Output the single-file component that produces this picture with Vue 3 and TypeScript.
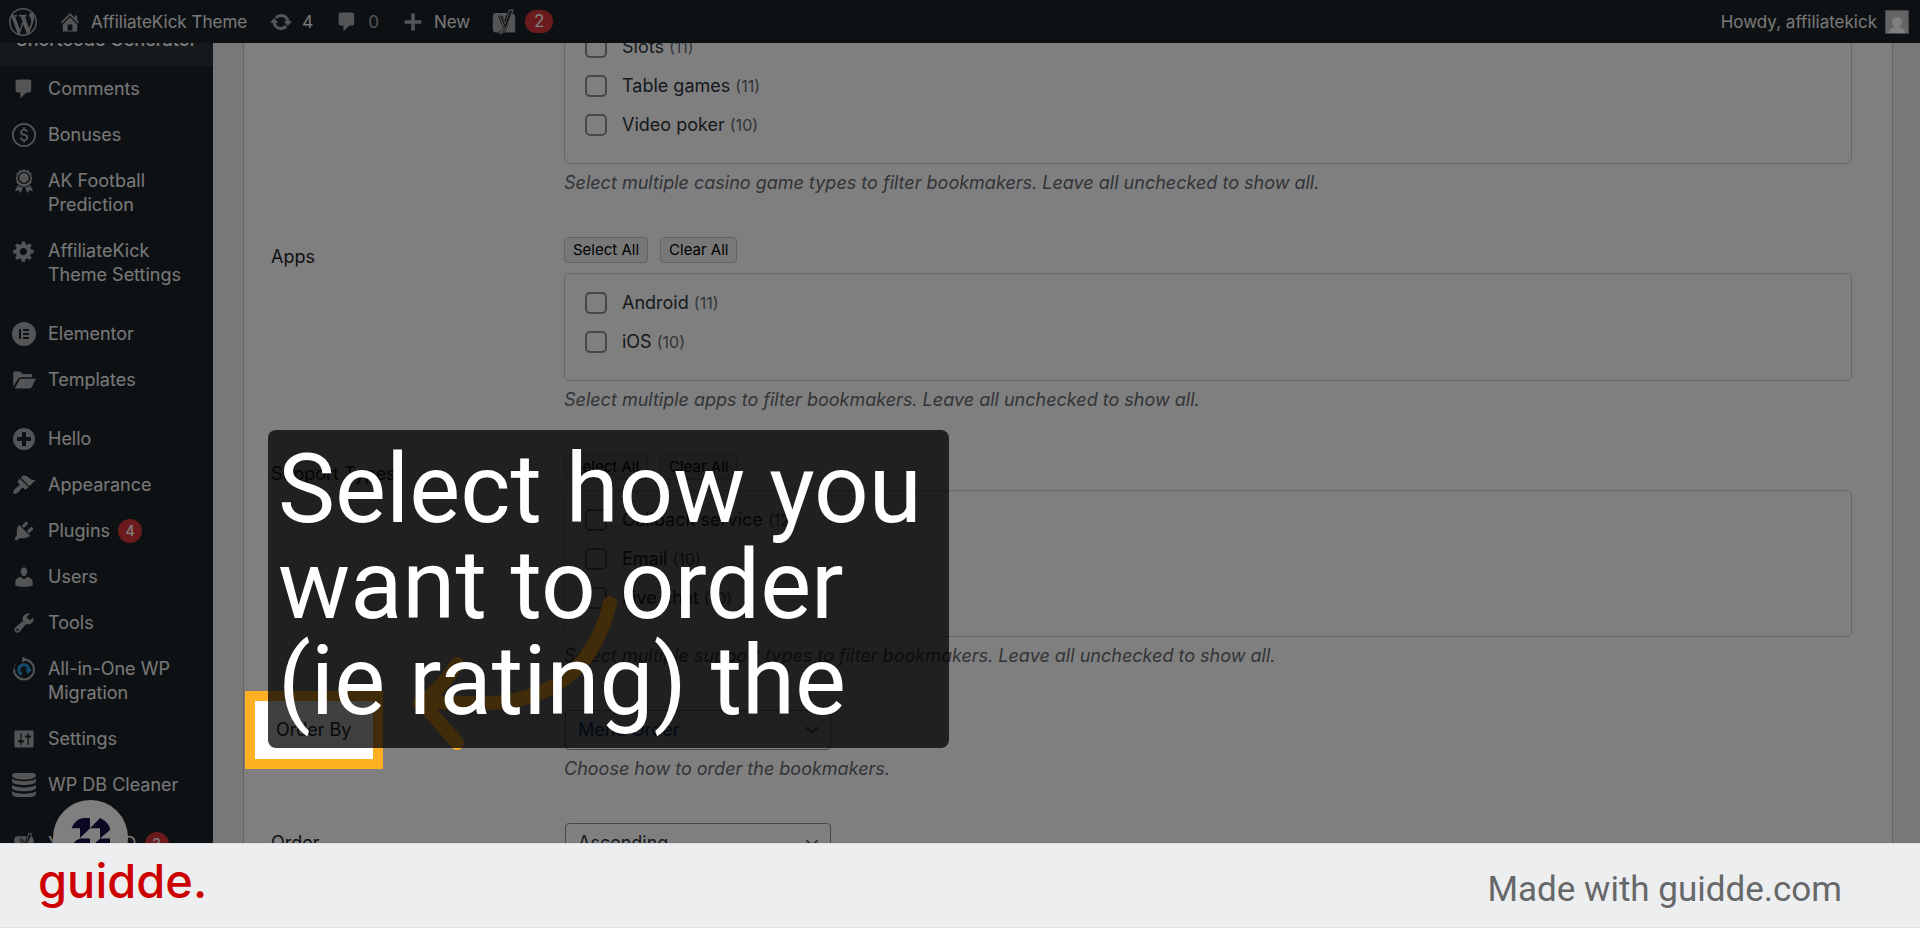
<script setup lang="ts">
import { reactive, ref } from 'vue'

interface Shape {
  d: string
  evenodd?: boolean
}
interface MenuItem {
  label: string
  icon: string
  badge?: number
  gap?: boolean
}
interface Option {
  name: string
  count: number
  checked: boolean
}
interface Group {
  id: string
  title: string
  tools: boolean
  hint: string
  options: Option[]
}

const icons: Record<string, Shape> = {
  wordpress: {
    d: 'M20 10c0-5.51-4.49-10-10-10C4.48 0 0 4.49 0 10c0 5.52 4.48 10 10 10 5.51 0 10-4.48 10-10zM7.78 15.37L4.37 6.22c.55-.02 1.17-.08 1.17-.08.5-.06.44-1.13-.06-1.11 0 0-1.45.11-2.37.11-.18 0-.37 0-.58-.01C4.12 2.69 6.87 1.11 10 1.11c2.33 0 4.45.87 6.05 2.34-.68-.11-1.65.39-1.65 1.58 0 .74.45 1.36.9 2.1.35.61.55 1.36.55 2.46 0 1.49-1.4 5-1.4 5l-3.03-8.37c.54-.02.82-.17.82-.17.5-.05.44-1.25-.06-1.22 0 0-1.44.12-2.38.12-.87 0-2.33-.12-2.33-.12-.5-.03-.56 1.2-.06 1.22l.92.08 1.26 3.41zM17.41 10c.24-.64.74-1.87.43-4.25.7 1.29 1.05 2.71 1.05 4.25 0 3.29-1.73 6.24-4.4 7.78.97-2.59 1.94-5.2 2.92-7.78zM6.1 18.09C3.12 16.65 1.11 13.53 1.11 10c0-1.3.23-2.48.72-3.59C3.25 10.3 4.67 14.2 6.1 18.09zm4.03-6.63l2.58 6.98c-.86.29-1.76.45-2.71.45-.79 0-1.57-.11-2.29-.33.81-2.38 1.62-4.74 2.42-7.1z',
  },
  home: {
    d: 'M16 8.5l1.53 1.53-1.06 1.06L10 4.6l-6.47 6.49-1.06-1.06L10 2.5l4 4v-2h2v4zm-6-2.46l6 5.99V18H4v-5.97zM12 17v-5H8v5h4z',
    evenodd: true,
  },
  update: {
    d: 'M10.2 3.28c3.53 0 6.43 2.61 6.92 6h2.08l-3.5 4-3.5-4h2.32c-.45-1.97-2.21-3.45-4.32-3.45-1.45 0-2.73.71-3.54 1.78L4.95 5.66C6.23 4.2 8.11 3.28 10.2 3.28zm-.4 13.44c-3.52 0-6.43-2.61-6.92-6H.8l3.5-4c1.17 1.33 2.33 2.67 3.5 4H5.48c.45 1.97 2.21 3.45 4.32 3.45 1.45 0 2.73-.71 3.54-1.78l1.71 1.95c-1.28 1.46-3.15 2.38-5.25 2.38z',
  },
  comment: {
    d: 'M5 2h9q.82 0 1.41.59T16 4v7q0 .82-.59 1.41T14 13h-2l-5 5v-5H5q-.82 0-1.41-.59T3 11V4q0-.82.59-1.41T5 2z',
  },
  plus: { d: 'M17 8.5v3h-5.500v5.500h-3v-5.500H3v-3h5.500V3h3v5.500z' },
  yoast: {
    d: 'M4.500 4H6Q2 4 4.500 4zM4.500 3.500H12.300L10.200 9.300 8.700 6H5.800L9 13q.4 1 0 2-.7 1.400-2.500 1.600V17.500H4.500Q2 17.500 2 15V6Q2 3.500 4.500 3.500zM15.800 3.800Q18 4.400 18 6.500V17.500H10.400Q11.600 16.200 12.300 14.300zM13.600 1H17L12.100 14Q10.600 18.400 6.900 18.900V16.900Q9.200 16.300 9.900 14L6.300 5.500H9L11 10.500zM14.200 2L11.100 11.800H10.700L8.400 6.400H7.600L10.700 13.900Q9.900 16.800 7.700 17.700V18Q10.200 17.300 11.400 13.800L15.800 2z',
    evenodd: true,
  },
  bonuses: {
    d: 'M10 0a10 10 0 1 0 0 20 10 10 0 0 0 0-20zm0 1.400a8.600 8.600 0 1 1 0 17.200 8.600 8.600 0 0 1 0-17.200zM9.300 3.600h1.500v1.300c1.300.2 2.200 1 2.500 2.200l-1.600.5c-.3-.9-.8-1.300-1.800-1.300-1 0-1.600.5-1.600 1.200 0 .8.600 1.100 2 1.500 2 .6 3.200 1.200 3.200 3 0 1.600-1.100 2.600-2.700 2.900v1.500H9.300v-1.500c-1.500-.2-2.600-1.100-2.800-2.700l1.600-.4c.2 1.100.9 1.700 2.100 1.700 1 0 1.700-.5 1.700-1.300 0-.9-.7-1.200-2.200-1.600C7.800 10.100 6.700 9.400 6.700 7.700c0-1.400 1-2.500 2.600-2.800z',
    evenodd: true,
  },
  awards: {
    d: 'M10 .2l1.700 1 2-.2.900 1.800 1.700 1.100-.2 2 .9 1.700-.9 1.800.2 2-1.700 1-.9 1.800-2-.1-1.700 1-1.700-1-2 .1-.9-1.800-1.700-1 .2-2L3 7.600l.9-1.700-.2-2 1.700-1.100L6.300 1l2 .2zM10 2.200a5.200 5.200 0 1 0 0 10.400 5.200 5.200 0 0 0 0-10.400zM10 3.400a4 4 0 1 1 0 8 4 4 0 0 1 0-8zM4.900 13.600l1.200 1.300 2-.1 1 .6-1.900 4.600-1.700-2.300-3.200.8zM15.100 13.600l-1.200 1.300-2-.1-1 .6 1.900 4.600 1.700-2.300 3.200.8z',
    evenodd: true,
  },
  gear: {
    d: 'M18 12h-2.180c-.17.7-.44 1.350-.81 1.930l1.540 1.540-2.100 2.100-1.540-1.540c-.58.36-1.230.63-1.910.79V19H8v-2.180c-.68-.16-1.330-.43-1.910-.79l-1.540 1.540-2.120-2.120 1.540-1.540c-.36-.58-.63-1.230-.79-1.910H1V9.030h2.170c.16-.7.44-1.350.8-1.940L2.430 5.550l2.100-2.100 1.540 1.540c.58-.37 1.240-.64 1.930-.81V2h3v2.180c.68.16 1.330.43 1.910.79l1.540-1.540 2.120 2.120-1.540 1.540c.36.59.64 1.240.8 1.940H18V12zm-8.500 1.500c1.660 0 3-1.340 3-3s-1.340-3-3-3-3 1.340-3 3 1.340 3 3 3z',
    evenodd: true,
  },
  elementor: {
    d: 'M10 0a10 10 0 1 0 0 20 10 10 0 0 0 0-20zM5.800 5.800h1.700v8.400H5.800zM9.200 5.800h5v1.700h-5zM9.200 9.150h5v1.700h-5zM9.200 12.500h5v1.700h-5z',
    evenodd: true,
  },
  folder: {
    d: 'M1 15.500V4q0-1 1-1h4.500q.7 0 1.100.6l1 1.400h7q1.200 0 1.200 1.200v1.500H7.500Q6 7.700 5.200 9zM2.300 17L6.300 9.700Q6.800 8.900 7.700 8.900H20L16.500 15.900Q16 17 14.800 17z',
  },
  hello: { d: 'M10 .8a9.200 9.200 0 1 0 0 18.400 9.200 9.200 0 0 0 0-18.400zM8.300 4.200h3.400v4.100h4.100v3.400h-4.100v4.100H8.300v-4.100H4.200V8.300h4.100z', evenodd: true },
  brush: {
    d: 'M14.480 11.060L7.410 3.990l1.500-1.500c.5-.56 2.300-.47 3.510.32 1.210.8 1.430 1.280 2.910 2.100 1.180.64 2.450 1.260 4.450.85zm-.71.71L6.700 4.700 4.930 6.470c-.39.39-.39 1.020 0 1.410l1.060 1.060c.39.39.39 1.030 0 1.420-.6.6-1.430 1.110-2.210 1.690-.35.26-.7.53-1.010.84C1.430 14.230.4 16.080 1.400 17.070c.99 1 2.840-.03 4.180-1.360.31-.31.58-.66.85-1.020.57-.78 1.080-1.610 1.690-2.210.39-.39 1.020-.39 1.410 0l1.060 1.060c.39.39 1.020.39 1.410 0z',
  },
  plug: {
    d: 'M13.110 4.360L9.870 7.600 8 5.730l3.240-3.240c.35-.34 1.050-.2 1.560.32.52.51.66 1.210.31 1.550zm-8 1.770l.91-1.120 9.010 9.010-1.190.84c-.71.71-2.630 1.160-3.820 1.160H6.140L4.900 17.260c-.59.59-1.540.59-2.120 0-.59-.58-.59-1.530 0-2.120l1.240-1.240v-3.880c0-1.130.4-3.190 1.090-3.890zm7.260 3.970l3.240-3.240c.34-.35 1.040-.21 1.550.31.52.51.66 1.210.31 1.550l-3.240 3.250z',
  },
  user: {
    d: 'M10 9.250c-2.270 0-2.730-3.440-2.730-3.440C7 4.020 7.820 2 9.970 2c2.160 0 2.980 2.020 2.710 3.810 0 0-.41 3.440-2.680 3.440zm0 2.570L12.720 10c2.390 0 4.520 2.330 4.520 4.530v2.490s-3.650 1.130-7.240 1.130c-3.650 0-7.240-1.130-7.240-1.130v-2.490c0-2.250 1.940-4.480 4.470-4.480z',
  },
  wrench: {
    d: 'M16.680 9.770c-1.340 1.340-3.300 1.670-4.950.99l-5.410 6.520c-.99.99-2.590.99-3.580 0s-.99-2.590 0-3.570l6.520-5.420c-.68-1.650-.35-3.610.99-4.950 1.280-1.280 3.120-1.620 4.720-1.060l-2.890 2.890 2.820 2.820 2.860-2.870c.53 1.580.18 3.390-1.080 4.650zM3.810 16.210c.4.39 1.040.39 1.430 0 .4-.4.4-1.040 0-1.430-.39-.4-1.030-.4-1.430 0-.39.39-.39 1.030 0 1.430z',
    evenodd: true,
  },
  sliders: {
    d: 'M18 16V4c0-.55-.45-1-1-1H3c-.55 0-1 .45-1 1v12c0 .55.45 1 1 1h14c.55 0 1-.45 1-1zM8 11h1c.55 0 1 .45 1 1s-.45 1-1 1H8v1.500c0 .28-.22.5-.5.5s-.5-.22-.5-.5V13H6c-.55 0-1-.45-1-1s.45-1 1-1h1V5.500c0-.28.22-.5.5-.5s.5.22.5.5V11zm5-2h-1c-.55 0-1-.45-1-1s.45-1 1-1h1V5.500c0-.28.22-.5.5-.5s.5.22.5.5V7h1c.55 0 1 .45 1 1s-.45 1-1 1h-1v5.500c0 .28-.22.5-.5.5s-.5-.22-.5-.5V9z',
    evenodd: true,
  },
  database: {
    d: 'M0 2C0 .2 4-1 10-1S20 .2 20 2s-4 3.500-10 3.500S0 3.800 0 2zM0 4.600C2.500 7.600 17.500 7.600 20 4.600V7.300C18.500 11 1.500 11 0 7.300zM0 9.800C2.500 12.800 17.500 12.800 20 9.800V12.500C18.500 16.200 1.500 16.200 0 12.500zM0 15C2.500 18 17.500 18 20 15V17.700C18.500 21.900 1.500 21.900 0 17.700z',
  },
}

const menu: MenuItem[] = [
  { label: 'Comments', icon: 'comment' },
  { label: 'Bonuses', icon: 'bonuses' },
  { label: 'AK Football Prediction', icon: 'awards' },
  { label: 'AffiliateKick Theme Settings', icon: 'gear' },
  { label: 'Elementor', icon: 'elementor', gap: true },
  { label: 'Templates', icon: 'folder' },
  { label: 'Hello', icon: 'hello', gap: true },
  { label: 'Appearance', icon: 'brush' },
  { label: 'Plugins', icon: 'plug', badge: 4 },
  { label: 'Users', icon: 'user' },
  { label: 'Tools', icon: 'wrench' },
  { label: 'All-in-One WP Migration', icon: 'migrate' },
  { label: 'Settings', icon: 'sliders' },
  { label: 'WP DB Cleaner', icon: 'database' },
  { label: 'Yoast SEO', icon: 'yoast', badge: 2, gap: true },
]

const groups = reactive<Group[]>([
  {
    id: 'games',
    title: '',
    tools: false,
    hint: 'Select multiple casino game types to filter bookmakers. Leave all unchecked to show all.',
    options: [
      { name: 'Slots', count: 11, checked: false },
      { name: 'Table games', count: 11, checked: false },
      { name: 'Video poker', count: 10, checked: false },
    ],
  },
  {
    id: 'apps',
    title: 'Apps',
    tools: true,
    hint: 'Select multiple apps to filter bookmakers. Leave all unchecked to show all.',
    options: [
      { name: 'Android', count: 11, checked: false },
      { name: 'iOS', count: 10, checked: false },
    ],
  },
  {
    id: 'support',
    title: 'Support Types',
    tools: true,
    hint: 'Select multiple support types to filter bookmakers. Leave all unchecked to show all.',
    options: [
      { name: 'Callback service', count: 12, checked: false },
      { name: 'Email', count: 10, checked: false },
      { name: 'Live chat', count: 10, checked: false },
    ],
  },
])

const orderBy = ref('Menu Order')
const order = ref('Ascending')

function setAll(group: Group, value: boolean) {
  group.options.forEach((o) => (o.checked = value))
}
</script>

<template>
  <div class="screen">
    <div class="admin">
      <header class="bar">
        <a href="#" class="bar-item logo" aria-label="WordPress">
          <svg class="ic-lg" viewBox="0 0 20 20"><path :d="icons.wordpress.d" /></svg>
        </a>
        <a href="#" class="bar-item site">
          <svg class="ic" viewBox="0 0 20 20"><path :d="icons.home.d" fill-rule="evenodd" /></svg>AffiliateKick Theme
        </a>
        <a href="#" class="bar-item updates">
          <svg class="ic" viewBox="0 0 20 20"><path :d="icons.update.d" /></svg>4
        </a>
        <a href="#" class="bar-item talk">
          <svg class="ic" viewBox="0 0 20 20"><path :d="icons.comment.d" /></svg><span class="muted">0</span>
        </a>
        <a href="#" class="bar-item new">
          <svg class="ic" viewBox="0 0 20 20"><path :d="icons.plus.d" /></svg>New
        </a>
        <a href="#" class="bar-item seo" aria-label="Yoast SEO notifications">
          <svg class="ic-lg" viewBox="0 0 20 20"><path :d="icons.yoast.d" fill-rule="evenodd" /></svg><span class="pill">2</span>
        </a>
        <a href="#" class="bar-item account">
          Howdy, affiliatekick
          <svg class="avatar" viewBox="0 0 24 24">
            <rect width="24" height="24" fill="#8c8f94" />
            <rect x="1" y="1" width="22" height="22" fill="#c8c8c8" />
            <path d="M12 7a5 5 0 0 1 5 5q0 2.500-2 4.300v1.200q4 .8 5 4.500v1H4v-1q1-3.700 5-4.500v-1.200Q7 14.500 7 12a5 5 0 0 1 5-5z" fill="#fff" />
          </svg>
        </a>
      </header>

      <div class="body">
        <nav class="side" aria-label="Admin menu">
          <a href="#" class="current">Shortcode Generator</a>
          <a v-for="item in menu" :key="item.label" href="#" class="item" :class="{ gap: item.gap }">
            <svg v-if="item.icon === 'migrate'" class="ic" viewBox="0 0 24 24">
              <path d="M12 2.500A10 10 0 1 1 2 12.500" fill="none" stroke="#a7aaad" stroke-width="2" />
              <path d="M2 12.500Q2 9 4 6.500" fill="none" stroke="#6f7377" stroke-width="1" />
              <path d="M10.500 -1l4.500 4-5 2.500z" />
              <path d="M9.800 17.300A5 5 0 1 1 16.800 13" fill="none" stroke="#1e9ad6" stroke-width="3" />
              <path d="M13.500 11.500l6.500 1.500-4.500 4z" fill="#1e9ad6" />
            </svg>
            <svg v-else class="ic" viewBox="0 0 20 20">
              <path :d="icons[item.icon].d" :fill-rule="icons[item.icon].evenodd ? 'evenodd' : 'nonzero'" />
            </svg>
            <span class="text">{{ item.label }}</span>
            <span v-if="item.badge" class="count">{{ item.badge }}</span>
          </a>
        </nav>

        <main class="page">
          <form class="card" @submit.prevent>
            <div v-for="group in groups" :key="group.id" class="row">
              <span :id="group.id + '-title'" class="title">{{ group.title }}</span>
              <div class="field" role="group" :aria-labelledby="group.id + '-title'">
                <div v-if="group.tools" class="tools">
                  <button type="button" @click="setAll(group, true)">Select All</button>
                  <button type="button" @click="setAll(group, false)">Clear All</button>
                </div>
                <div class="box">
                  <label v-for="option in group.options" :key="option.name" class="option">
                    <input v-model="option.checked" type="checkbox" />
                    <span>{{ option.name }} <small>({{ option.count }})</small></span>
                  </label>
                </div>
                <p class="hint">{{ group.hint }}</p>
              </div>
            </div>

            <div class="row">
              <div class="title anchor">
                <label for="order-by" class="spot">Order By</label>
              </div>
              <div class="field">
                <div class="pick active">
                  <select id="order-by" v-model="orderBy">
                    <option>Menu Order</option>
                  </select>
                  <svg viewBox="0 0 20 20"><path d="M4 7l6 6 6-6" /></svg>
                </div>
                <p class="hint">Choose how to order the bookmakers.</p>
              </div>
            </div>

            <div class="row">
              <label for="order" class="title">Order</label>
              <div class="field">
                <div class="pick">
                  <select id="order" v-model="order">
                    <option>Ascending</option>
                  </select>
                  <svg viewBox="0 0 20 20"><path d="M4 7l6 6 6-6" /></svg>
                </div>
              </div>
            </div>
          </form>
        </main>
      </div>

      <div class="bubble">
        <svg viewBox="0 0 75 75">
          <path
            d="M18.500 28.300Q23 18 31 18H37V28.300L27 38V28.300zM37 28.300L47 18Q55 21.500 57 28.300V30L47 38.500V28.300zM18.500 48Q20 41 27 38.500H37V48L27 58V48zM37 48L47 38.500H57V48Q55 56 47 58V48z"
            fill="#181046"
          />
        </svg>
      </div>
      <div class="shade"></div>
    </div>

    <svg class="arrow" viewBox="0 0 220 164">
      <path d="M202 16Q176 122 60 116L12 115M49 77Q34 102 12 116Q28 130 49 156" />
    </svg>
    <div class="caption">Select how you want to order (ie rating) the</div>

    <footer class="foot">
      <a href="#" class="brand">guidde.</a>
      <span class="made">Made with guidde.com</span>
    </footer>
  </div>
</template>

<style>
body {
  margin: 0;
}
</style>

<style scoped>
* {
  box-sizing: border-box;
}
.screen {
  position: relative;
  display: flex;
  flex-direction: column;
  height: 100vh;
  overflow: hidden;
  font-family: Inter, "Liberation Sans", sans-serif;
  font-size: 18px;
  line-height: 24px;
  color: #3c434a;
}
a {
  color: inherit;
  text-decoration: none;
}
.admin {
  position: relative;
  display: flex;
  flex-direction: column;
  flex: 1;
  min-height: 0;
  overflow: hidden;
}
.bar {
  display: flex;
  align-items: center;
  flex: none;
  height: 43px;
  padding: 0 11px 0 9px;
  background: #1d2327;
  color: #f0f0f1;
  font-size: 17px;
}
.bar-item {
  display: flex;
  align-items: center;
  gap: 9px;
  white-space: nowrap;
}
svg {
  flex: none;
  fill: #a7aaad;
}
.ic {
  width: 24px;
  height: 24px;
}
.ic-lg {
  width: 28px;
  height: 28px;
}
.site {
  margin-left: 21px;
}
.updates {
  margin-left: 22px;
}
.talk {
  margin-left: 22px;
}
.new {
  margin-left: 22px;
}
.seo {
  gap: 7px;
  margin-left: 20px;
}
.account {
  gap: 8px;
  margin-left: auto;
}
.muted {
  color: #a7aaad;
}
.pill {
  min-width: 28px;
  height: 23px;
  border-radius: 12px;
  background: #d63638;
  color: #fff;
  line-height: 23px;
  text-align: center;
}
.avatar {
  width: 24px;
  height: 24px;
}
.body {
  display: flex;
  flex: 1;
  min-height: 0;
  overflow: hidden;
}
.side {
  flex: none;
  width: 213px;
  background: #1d2327;
  color: #f0f0f1;
}
.current {
  display: flex;
  align-items: flex-end;
  height: 38px;
  margin-top: -15px;
  padding: 0 16px 14px;
  background: #2c3338;
  color: #fff;
  font-weight: 500;
  white-space: nowrap;
}
.item {
  display: flex;
  align-items: flex-start;
  gap: 12px;
  padding: 11px 20px 11px 12px;
}
.item.gap {
  margin-top: 13px;
}
.count {
  width: 24px;
  height: 24px;
  margin-left: -4px;
  border-radius: 12px;
  background: #d63638;
  color: #fff;
  font-size: 14px;
  font-weight: 500;
  text-align: center;
}
.page {
  flex: 1;
  min-width: 0;
  padding: 0 27px 0 30px;
  background: #f0f0f1;
}
.card {
  min-height: 100%;
  margin-top: -46px;
  padding: 0 40px 0 27px;
  border: 1px solid #c3c4c7;
  border-width: 0 1px;
  background: #fff;
}
.row {
  display: grid;
  grid-template-columns: 293px 1fr;
}
.title {
  padding-top: 28px;
  color: #1d2327;
}
.field {
  padding: 20px 0;
}
.tools {
  display: flex;
  gap: 12px;
  margin-bottom: 10px;
}
.tools button {
  height: 26px;
  padding: 0 8px;
  border: 1px solid #c3c4c7;
  border-radius: 4px;
  background: #f0f0f1;
  color: #000;
  font: 15px/22px Inter, "Liberation Sans", sans-serif;
}
.box {
  padding: 15px 20px 13px;
  border: 1px solid #cfd0d3;
  border-radius: 5px;
  box-shadow: inset 0 1px 1px rgba(0, 0, 0, 0.06);
}
.option {
  display: flex;
  align-items: center;
  gap: 15px;
  height: 28px;
  margin-bottom: 11px;
  color: #2c3338;
}
.option input {
  appearance: none;
  width: 22px;
  height: 22px;
  margin: 0;
  border: 2px solid #8c8f94;
  border-radius: 5px;
  background: #fff;
}
.option input:checked {
  background: #3582c4;
}
.option small {
  color: #646970;
  font-size: 16px;
}
.hint {
  margin: 5px 0 0;
  color: #646970;
  font-style: italic;
  line-height: 28px;
}
.anchor {
  position: relative;
}
.spot {
  position: absolute;
  z-index: 2;
  top: 1px;
  left: -26px;
  display: flex;
  align-items: center;
  width: 138px;
  height: 78px;
  padding-left: 21px;
  border: 10px solid #ffb022;
  background: #fff;
}
.pick {
  position: relative;
  width: 266px;
  margin-left: 1px;
}
.pick select {
  appearance: none;
  display: block;
  width: 100%;
  height: 40px;
  padding: 0 32px 0 12px;
  border: 1px solid #8c8f94;
  border-radius: 4px;
  background: #fff;
  color: #2c3338;
  font: 18px/38px Inter, "Liberation Sans", sans-serif;
}
.pick.active select {
  color: #0060b0;
}
.pick svg {
  position: absolute;
  top: 11px;
  right: 10px;
  width: 18px;
  height: 18px;
  fill: none;
  stroke: #50575e;
  stroke-width: 2;
  pointer-events: none;
}
.bubble {
  position: absolute;
  left: 53px;
  bottom: -32px;
  width: 75px;
  height: 75px;
  border-radius: 50%;
  background: #fff;
  overflow: hidden;
}
.shade {
  position: absolute;
  inset: 0;
  z-index: 1;
  background: rgba(0, 0, 0, 0.5);
}
.arrow {
  position: absolute;
  z-index: 3;
  top: 587px;
  left: 408px;
  width: 220px;
  height: 164px;
  fill: none;
  stroke: #ffb022;
  stroke-width: 14;
  stroke-linecap: round;
  stroke-linejoin: round;
}
.caption {
  position: absolute;
  z-index: 4;
  top: 430px;
  left: 268px;
  width: 681px;
  padding: 11px 10px 19px;
  border-radius: 8px;
  background: rgba(0, 0, 0, 0.75);
  color: #fff;
  font-family: Roboto, sans-serif;
  font-size: 96px;
  line-height: 96px;
}
.foot {
  position: relative;
  z-index: 5;
  display: flex;
  justify-content: space-between;
  align-items: center;
  flex: none;
  height: 85px;
  padding: 0 78px 0 38px;
  border: 1px solid #dfe0e2;
  border-width: 1px 0;
  background: #edeef0;
}
.brand {
  padding-bottom: 10px;
  color: #c00;
  font-size: 47px;
  font-weight: 500;
  line-height: 60px;
}
.made {
  padding-top: 8px;
  color: #666769;
  font-family: Roboto, sans-serif;
  font-size: 35px;
  line-height: 40px;
}
</style>
